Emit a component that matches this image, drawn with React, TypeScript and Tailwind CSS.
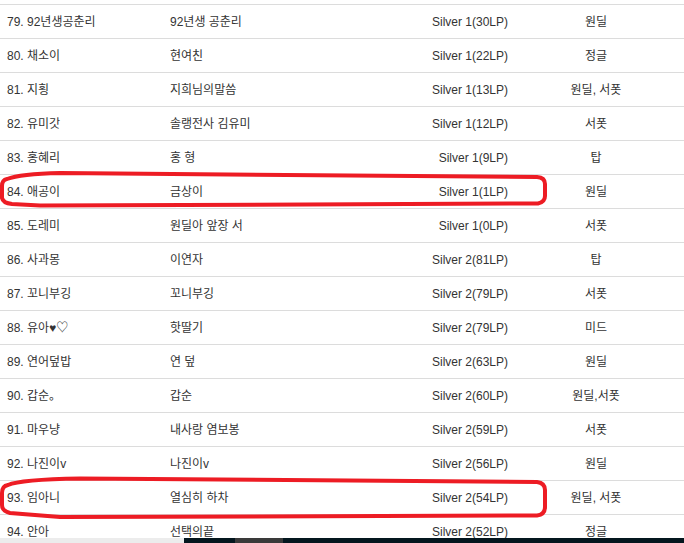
import React from "react";

const rows: [string, string, string, string][] = [
  ["79. 92년생공춘리", "92년생 공춘리", "Silver 1(30LP)", "원딜"],
  ["80. 채소이", "현여친", "Silver 1(22LP)", "정글"],
  ["81. 지횡", "지희님의말씀", "Silver 1(13LP)", "원딜, 서폿"],
  ["82. 유미갓", "솔랭전사 김유미", "Silver 1(12LP)", "서폿"],
  ["83. 홍혜리", "홍 형", "Silver 1(9LP)", "탑"],
  ["84. 애공이", "금상이", "Silver 1(1LP)", "원딜"],
  ["85. 도레미", "원딜아 앞장 서", "Silver 1(0LP)", "서폿"],
  ["86. 사과몽", "이연자", "Silver 2(81LP)", "탑"],
  ["87. 꼬니부깅", "꼬니부깅", "Silver 2(79LP)", "서폿"],
  ["88. 유아♥♡", "핫딸기", "Silver 2(79LP)", "미드"],
  ["89. 연어덮밥", "연 덮", "Silver 2(63LP)", "원딜"],
  ["90. 갑순。", "갑순", "Silver 2(60LP)", "원딜,서폿"],
  ["91. 마우냥", "내사랑 염보봉", "Silver 2(59LP)", "서폿"],
  ["92. 나진이v", "나진이v", "Silver 2(56LP)", "원딜"],
  ["93. 임아니", "열심히 하차", "Silver 2(54LP)", "원딜, 서폿"],
  ["94. 안아", "선택의끝", "Silver 2(52LP)", "정글"],
];

export default function App() {
  return (
    <div
      className="relative w-[684px] h-[543px] overflow-hidden bg-white text-[12px] text-[#333]"
      style={{ fontFamily: '"Liberation Sans", "Noto Sans CJK KR", sans-serif' }}
    >
      <div className="h-[4px]" />
      {rows.map((r, i) => (
        <div key={i} className="flex h-[34px] items-center border-t border-[#dcdcdc]">
          <div className="w-[170px] pl-[7px] whitespace-nowrap">{r[0]}</div>
          <div className="w-[200px] whitespace-nowrap">{r[1]}</div>
          <div className="w-[138px] text-right whitespace-nowrap">{r[2]}</div>
          <div className="w-[176px] text-center whitespace-nowrap">{r[3]}</div>
        </div>
      ))}

      <svg
        className="absolute left-0 top-0 pointer-events-none"
        width="684"
        height="543"
        viewBox="0 0 684 543"
      >
        <path
          d="M 7 179 Q 2 180 2 186 L 2 198 Q 3 203 12 204 L 40 205.5 L 538 203.5 Q 545 202 545 196 L 545 184 Q 545 177.5 537 177 L 60 173 Q 20 174 7 179 Z"
          fill="none"
          stroke="#ed1c24"
          strokeWidth="4"
        />
        <path
          d="M 8 485 Q 2 486 2 493 L 2 505 Q 2 511 10 513 L 60 517 L 537 515.5 Q 545 514.5 545 507 L 545 490 Q 545 483 537 482 L 80 478.5 Q 20 479.5 8 485 Z"
          fill="none"
          stroke="#ed1c24"
          strokeWidth="4"
        />
      </svg>

      <div className="absolute left-0 right-0 bottom-0 h-[5px] flex">
        <div className="w-[184px] bg-[#ececec]" />
        <div className="w-[51px] bg-[#04161e]" />
        <div className="w-[48px] bg-[#3a3a3a]" />
        <div className="flex-1 bg-[#04161e]" />
      </div>
    </div>
  );
}
